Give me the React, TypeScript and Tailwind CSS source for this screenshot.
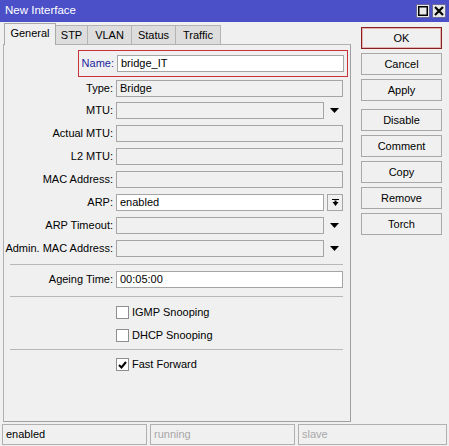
import React from "react";

const font = { fontFamily: '"Liberation Sans", Arial, sans-serif' };

const Arrow = () => (
  <svg width="9" height="5" viewBox="0 0 9 5">
    <path d="M0 0h9L4.5 5z" fill="#000" />
  </svg>
);

const Field = ({
  label,
  value,
  white,
  drop,
  button,
  h = "h-[23px]",
}: {
  label: string;
  value?: string;
  white?: boolean;
  drop?: boolean;
  button?: boolean;
  h?: string;
}) => (
  <div className={`flex items-start pt-[2px] ${h}`}>
    <div className="w-[109px] text-right leading-[17px] whitespace-nowrap">{label}</div>
    <div
      className={`ml-[3px] h-[17px] border border-[#a5a5a5] px-[3px] leading-[15px] ${
        white ? "bg-white" : "bg-[#f0f0f0]"
      } ${drop || button ? "w-[208px]" : "w-[227px]"}`}
    >
      {value}
    </div>
    {drop && (
      <div className="w-[19px] h-[17px] flex items-center justify-center pl-[2px]">
        <Arrow />
      </div>
    )}
    {button && (
      <div className="ml-[3px] w-[16px] h-[17px] border border-[#a5a5a5] bg-[#f0f0f0] flex items-center justify-center">
        <svg width="7" height="7" viewBox="0 0 7 7">
          <rect x="0" y="0" width="7" height="1" fill="#000" />
          <path d="M2.5 1.5h2v1.5h2L3.5 7 0.5 3h2z" fill="#000" />
        </svg>
      </div>
    )}
  </div>
);

const Check = ({ label, checked }: { label: string; checked?: boolean }) => (
  <div className="flex items-center h-[23px] pl-[112px]">
    <div className="w-[13px] h-[13px] border border-[#8e8e8e] bg-white flex items-center justify-center">
      {checked && (
        <svg width="9" height="8" viewBox="0 0 9 8">
          <path d="M1 4l2.5 2.5L8 1" stroke="#000" strokeWidth="2" fill="none" />
        </svg>
      )}
    </div>
    <span className="ml-[3px]">{label}</span>
  </div>
);

const Sep = ({ cls }: { cls: string }) => (
  <div className={`ml-[6px] w-[333px] h-px bg-[#b8b8b8] ${cls}`} />
);

const Btn = ({ label, ok, cls = "" }: { label: string; ok?: boolean; cls?: string }) => (
  <div
    className={`h-[22px] w-[81px] flex items-center justify-center bg-[#f0f0f0] border ${
      ok ? "border-[#8a1f1f] shadow-[inset_0_0_0_1px_#e4b4b4]" : "border-[#a8a8a8]"
    } ${cls}`}
  >
    {label}
  </div>
);

export default function App() {
  return (
    <div
      className="w-[449px] h-[446px] bg-[#f0f0f0] flex flex-col text-[11px] text-black overflow-hidden"
      style={font}
    >
      <div className="h-[22px] bg-[#4b50c8] flex items-center justify-between pl-[5px] pr-[3px]">
        <span className="text-white text-[11.5px]">New Interface</span>
        <div className="flex gap-[2px]">
          <div className="w-[14px] h-[14px] bg-[#e8e8e8] border border-[#6a6a9a] flex items-center justify-center">
            <svg width="10" height="10" viewBox="0 0 10 10">
              <rect x="0.75" y="0.75" width="8.5" height="8.5" fill="none" stroke="#000" strokeWidth="1.5" />
            </svg>
          </div>
          <div className="w-[14px] h-[14px] bg-[#e8e8e8] border border-[#6a6a9a] flex items-center justify-center">
            <svg width="10" height="10" viewBox="0 0 10 10">
              <path d="M1 1L9 9M9 1L1 9" stroke="#000" strokeWidth="2.2" />
            </svg>
          </div>
        </div>
      </div>

      <div className="flex h-[402px]">
        <div className="ml-[3px] w-[348px] flex flex-col">
          <div className="h-[22px] flex items-end pl-[1px]">
            <div className="w-[52px] h-[22px] bg-[#f0f0f0] border border-b-0 border-[#a9a9a9] flex items-center justify-center pb-[2px] relative top-px z-10">
              General
            </div>
            <div className="w-[32px] h-[19px] bg-[#dddddd] border border-b-0 border-l-0 border-[#b4b4b4] flex items-center justify-center">
              STP
            </div>
            <div className="w-[44px] h-[19px] bg-[#dddddd] border border-b-0 border-l-0 border-[#b4b4b4] flex items-center justify-center">
              VLAN
            </div>
            <div className="w-[44px] h-[19px] bg-[#dddddd] border border-b-0 border-l-0 border-[#b4b4b4] flex items-center justify-center">
              Status
            </div>
            <div className="w-[45px] h-[19px] bg-[#dddddd] border border-b-0 border-l-0 border-[#b4b4b4] flex items-center justify-center">
              Traffic
            </div>
          </div>
          <div className="h-[378px] border border-[#b0b0b0] border-r-[#a0a0a0] border-b-[#a0a0a0] flex flex-col">
            <div className="mt-[5px] mb-[1px] ml-[74px] w-[270px] h-[27px] border border-[#c8323a] flex items-center justify-end pr-[3px]">
              <span className="text-[#1f1fa0]">Name:</span>
              <div className="ml-[3px] w-[227px] h-[17px] border border-[#a5a5a5] bg-white px-[3px] leading-[15px]">
                bridge_IT
              </div>
            </div>
            <Field label="Type:" value="Bridge" h="h-[22px]" />
            <Field label="MTU:" drop />
            <Field label="Actual MTU:" />
            <Field label="L2 MTU:" />
            <Field label="MAC Address:" />
            <Field label="ARP:" value="enabled" white button />
            <Field label="ARP Timeout:" drop />
            <Field label="Admin. MAC Address:" drop />
            <Sep cls="mt-[3px] mb-[4px]" />
            <Field label="Ageing Time:" value="00:05:00" white />
            <Sep cls="mt-[4px] mb-[4px]" />
            <Check label="IGMP Snooping" />
            <Check label="DHCP Snooping" />
            <Sep cls="mt-[2px] mb-[3px]" />
            <Check label="Fast Forward" checked />
          </div>
        </div>

        <div className="ml-[10px] pt-[5px] flex flex-col gap-[4px]">
          <Btn label="OK" ok />
          <Btn label="Cancel" />
          <Btn label="Apply" />
          <Btn label="Disable" cls="mt-[4px]" />
          <Btn label="Comment" />
          <Btn label="Copy" />
          <Btn label="Remove" />
          <Btn label="Torch" />
        </div>
      </div>

      <div className="h-[21px] flex gap-[3px] pl-[2px] pr-[2px]">
        <div className="w-[145px] border border-[#b0b0b0] px-[3px] leading-[19px]">enabled</div>
        <div className="w-[145px] border border-[#b0b0b0] px-[3px] leading-[19px] text-[#a8a8a8]">running</div>
        <div className="flex-1 border border-[#b0b0b0] px-[3px] leading-[19px] text-[#a8a8a8]">slave</div>
      </div>
    </div>
  );
}
